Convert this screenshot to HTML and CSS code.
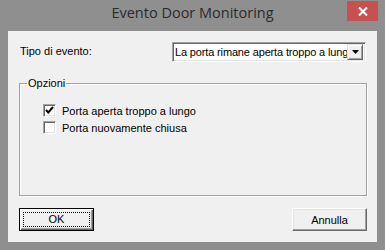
FILE: index.html
```html
<!DOCTYPE html>
<html lang="it">
<head>
  <meta charset="UTF-8" />
  <title>Evento Door Monitoring</title>
  <link rel="stylesheet" href="styles.css">
</head>
<body>

<div class="window">
  <div class="titlebar">
    <span class="title">Evento Door Monitoring</span>
    <span class="close">
      <svg width="10" height="9" viewBox="0 0 10 9"><path d="M1 0.5 L9 8.5 M9 0.5 L1 8.5" stroke="#fff" stroke-width="2"/></svg>
    </span>
  </div>

  <div class="client">
    <div class="row">
      <label class="label">Tipo di evento:</label>
      <div class="combo">
        <span class="combo-text">La porta rimane aperta troppo a lungo</span>
        <span class="combo-btn">
          <svg width="7" height="4" viewBox="0 0 7 4"><path d="M0 0 H7 L3.5 4 Z" fill="#000"/></svg>
        </span>
      </div>
    </div>

    <fieldset class="group">
      <legend>Opzioni</legend>
      <div class="check">
        <span class="box">
          <svg width="9" height="9" viewBox="0 0 9 9"><path d="M1 4 L3.3 6.5 L8 1" stroke="#000" stroke-width="2" fill="none"/></svg>
        </span>
        <span>Porta aperta troppo a lungo</span>
      </div>
      <div class="check">
        <span class="box"></span>
        <span>Porta nuovamente chiusa</span>
      </div>
    </fieldset>

    <div class="buttons">
      <button class="btn default"><span class="focus">OK</span></button>
      <button class="btn">Annulla</button>
    </div>
  </div>
</div>

</body>
</html>
```

FILE: styles.css
```css
body {
  margin: 0;
  font-family: 'Liberation Sans', Arial, sans-serif;
  font-size: 11px;
  color: #000;
}
.window {
  width: 385px;
  height: 250px;
  box-sizing: border-box;
  background: #8f8f8f;
  padding: 0 8px 8px;
  display: flex;
  flex-direction: column;
}
.titlebar {
  height: 31px;
  position: relative;
  display: flex;
  justify-content: center;
}
.title {
  font-family: 'Open Sans', 'Noto Sans', sans-serif;
  font-size: 14.5px;
  color: #2b2b2b;
  margin-top: 3px;
}
.close {
  position: absolute;
  top: 1px;
  right: -1px;
  width: 31px;
  height: 20px;
  background: #c75050;
  display: flex;
  align-items: center;
  justify-content: center;
}
.client {
  flex: 1;
  background: #f0f0f0;
  padding: 11px 11px 0 11px;
  display: flex;
  flex-direction: column;
}
.row {
  display: flex;
  justify-content: space-between;
  align-items: center;
  height: 20px;
}
.label {
  padding-left: 1px;
  margin-top: -3px;
}
.combo {
  width: 194px;
  height: 20px;
  box-sizing: border-box;
  background: #fff;
  border: 1px solid;
  border-color: #a0a0a0 #fff #fff #a0a0a0;
  box-shadow: inset 1px 1px 0 #696969, inset -1px -1px 0 #e3e3e3;
  display: flex;
  align-items: center;
  padding: 2px;
}
.combo-text {
  flex: 1;
  overflow: hidden;
  white-space: nowrap;
  letter-spacing: -0.15px;
}
.combo-btn {
  width: 16px;
  height: 16px;
  box-sizing: border-box;
  background: #f0f0f0;
  border: 1px solid;
  border-color: #e3e3e3 #696969 #696969 #e3e3e3;
  box-shadow: inset 1px 1px 0 #fff, inset -1px -1px 0 #a0a0a0;
  display: flex;
  align-items: center;
  justify-content: center;
}
.group {
  margin: 15px 0 0 0;
  height: 119px;
  box-sizing: border-box;
  border: 1px solid #a0a0a0;
  box-shadow: 1px 1px 0 #fff, inset 1px 1px 0 #fff;
  padding: 13px 0 0 23px;
  width: 348px;
}
.group legend {
  padding: 0 1px;
  margin-left: -16px;
  line-height: 12px;
}
.check {
  display: flex;
  align-items: center;
  gap: 6px;
  height: 17px;
}
.box {
  width: 13px;
  height: 13px;
  box-sizing: border-box;
  background: #fff;
  border: 1px solid;
  border-color: #a0a0a0 #fff #fff #a0a0a0;
  box-shadow: inset 1px 1px 0 #696969, inset -1px -1px 0 #e3e3e3;
  display: flex;
  align-items: center;
  justify-content: center;
}
.buttons {
  display: flex;
  justify-content: space-between;
  margin-top: 12px;
}
.btn {
  width: 75px;
  height: 23px;
  box-sizing: border-box;
  font: inherit;
  color: #000;
  background: #f0f0f0;
  border: 1px solid;
  border-color: #fff #696969 #696969 #fff;
  box-shadow: inset -1px -1px 0 #a0a0a0, inset 1px 1px 0 #e3e3e3;
  padding: 0;
  margin-right: -1px;
}
.btn.default {
  border: 1px solid #000;
  box-shadow: inset 1px 1px 0 #fff, inset -1px -1px 0 #696969, inset -2px -2px 0 #a0a0a0;
  margin-right: 0;
  padding: 3px;
}
.focus {
  display: block;
  height: 100%;
  box-sizing: border-box;
  border: 1px dotted #000;
  line-height: 13px;
}
```
